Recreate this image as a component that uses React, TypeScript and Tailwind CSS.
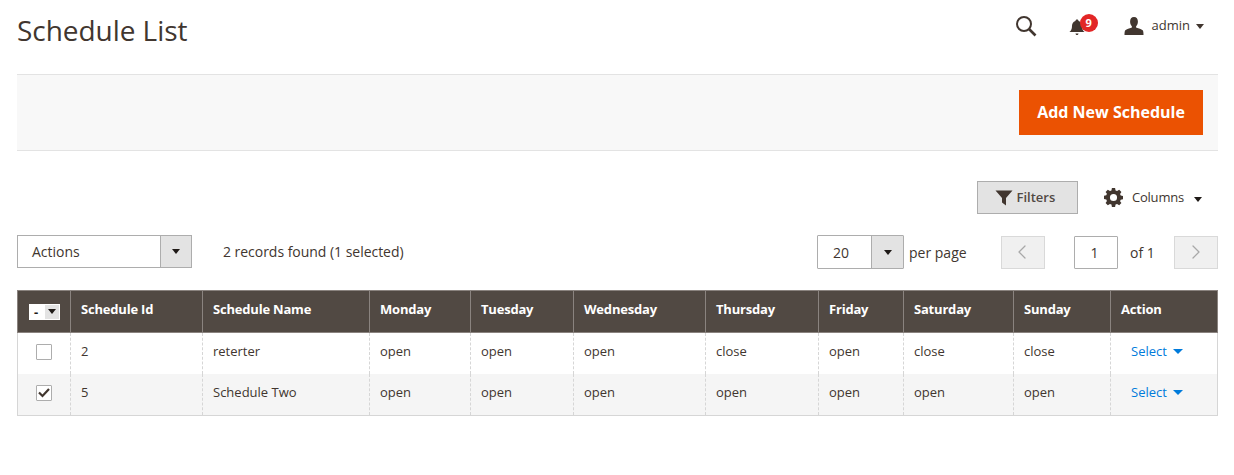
import React from 'react';
import { ChevronLeft, ChevronRight } from 'lucide-react';

const days = ['Monday', 'Tuesday', 'Wednesday', 'Thursday', 'Friday', 'Saturday', 'Sunday'];
const colWidths = [53, 132, 167, 101, 103, 132, 113, 85, 110, 97, 107];

const rows = [
  { id: '2', name: 'reterter', hours: ['open', 'open', 'open', 'close', 'open', 'close', 'close'], checked: false },
  { id: '5', name: 'Schedule Two', hours: ['open', 'open', 'open', 'open', 'open', 'open', 'open'], checked: true },
];

const Caret = ({ className = '' }: { className?: string }) => (
  <span className={`inline-block w-0 h-0 border-x-[4.5px] border-x-transparent border-t-[5px] ${className}`} />
);

const App: React.FC = () => {
  return (
    <div className="w-[1234px] h-[475px] overflow-hidden bg-white text-[#41362f] font-['Open_Sans',sans-serif] text-[14px]">
      {/* Header */}
      <header className="h-[74px] pl-[17px] pr-[30px] flex items-start justify-between">
        <h1 className="text-[28px] leading-[38px] mt-[11px] font-normal tracking-[-0.05px]">Schedule List</h1>
        <div className="flex items-center mt-[13px] h-[26px]">
          <svg width="22" height="22" viewBox="0 0 22 22" fill="none" stroke="#41362f" className="mr-[32px]">
            <circle cx="9" cy="9" r="7" strokeWidth="2" />
            <path d="M14 14l6.5 6.5" strokeWidth="2.6" />
          </svg>
          <div className="relative w-[16px] h-[18px] mt-[4px] mr-[39px]">
            <svg width="16" height="18" viewBox="0 0 16 18" fill="#41362f">
              <path d="M8 0.5c1 0 1.5.7 1.6 1.4C12 2.6 13 4.6 13 7c0 3 .8 4.6 2.6 6H.4C2.2 11.600 3 10 3 7c0-2.400 1-4.400 3.400-5.100C6.500 1.200 7 .5 8 .5zM6.500 14.500h3c0 .9-.6 1.500-1.500 1.500s-1.500-.6-1.500-1.500z" />
            </svg>
            <span className="absolute left-[11px] -top-[5px] w-[18px] h-[18px] rounded-full bg-[#e22626] text-white text-[11px] font-bold leading-[18px] text-center">9</span>
          </div>
          <svg width="20" height="18" viewBox="0 0 20 18" fill="#41362f" className="mr-[8px] -mt-[1px]">
            <path d="M10 0c2.600 0 3.900 1.900 3.900 4.600 0 1.900-.7 3.600-1.700 4.600-.3.500-.2 1.300.4 1.600 2 .9 4.700 1.200 6.100 2.400.7.700.8 2.900.8 4.800H.5c0-1.900.1-4.100.8-4.800 1.400-1.200 4.100-1.500 6.100-2.400.6-.3.7-1.100.4-1.600C6.800 8.200 6.100 6.500 6.100 4.600 6.100 1.900 7.400 0 10 0z" />
          </svg>
          <span className="text-[13px] leading-[18px] -mt-[2px]">admin</span>
          <Caret className="border-t-[#41362f] ml-[6px]" />
        </div>
      </header>

      {/* Page actions */}
      <div className="ml-[17px] mr-[16px] h-[77px] bg-[#f8f8f8] border-y border-[#e3e3e3] flex items-center justify-end pr-[15px]">
        <button className="w-[184px] h-[45px] bg-[#eb5202] text-white text-[16px] font-bold pb-[2px]">Add New Schedule</button>
      </div>

      {/* Grid toolbar */}
      <div className="ml-[17px] mr-[16px] mt-[30px] h-[33px] flex items-center justify-end pr-[16px]">
        <button className="w-[101px] h-[33px] pr-[5px] bg-[#e3e3e3] border border-[#adadad] flex items-center justify-center gap-[4px] text-[13px] text-[#514943] font-semibold">
          <svg width="18" height="16" viewBox="0 0 18 16" fill="#41362f">
            <path d="M0.5 0.500h17L11 8v7.500L7 12.500V8z" />
          </svg>
          Filters
        </button>
        <svg width="19" height="19" viewBox="0 0 24 24" fill="#41362f" className="ml-[26px]">
          <path fillRule="evenodd" d="M10 1h4l.6 3.100 1.900.8L19.200 3.200 22 6l-1.700 2.700.8 1.900 3 .6v4l-3 .6-.8 1.900L22 20l-2.800 2.800-2.700-1.700-1.900.8L14 25h-4l-.6-3.100-1.900-.8L4.800 22.800 2 20l1.700-2.700-.8-1.900-3-.6v-4l3-.6.8-1.900L2 6l2.800-2.800 2.700 1.700 1.900-.8zM12 8.500a4.500 4.500 0 1 0 0 9 4.500 4.500 0 0 0 0-9z" transform="translate(0 -1)" />
        </svg>
        <span className="ml-[9px] text-[13px] tracking-[-0.2px]">Columns</span>
        <Caret className="border-t-[#1f1a17] ml-[10px] mt-[3px]" />
      </div>

      {/* Mass actions and pager */}
      <div className="ml-[17px] mr-[16px] mt-[21px] h-[34px] flex items-center text-[14px]">
        <div className="w-[175px] h-[33px] self-start border border-[#adadad] flex items-center">
          <span className="flex-1 pl-[14px]">Actions</span>
          <span className="w-[31px] h-full bg-[#e3e3e3] border-l border-[#adadad] flex items-center justify-center">
            <Caret className="border-t-[#1f1a17]" />
          </span>
        </div>
        <span className="ml-[31px] -mt-[1px] tracking-[-0.03px]">2 records found (1 selected)</span>
        <div className="ml-auto h-[34px] flex items-start">
          <div className="w-[87px] h-[34px] border border-[#adadad] rounded-[1px] flex items-center">
            <span className="flex-1 pl-[15px]">20</span>
            <span className="w-[32px] h-full bg-[#e3e3e3] border-l border-[#adadad] flex items-center justify-center">
              <Caret className="border-t-[#1f1a17]" />
            </span>
          </div>
          <span className="ml-[5px] w-[92px] leading-[36px]">per page</span>
          <span className="mt-px w-[44px] h-[33px] bg-[#f0f0f0] border border-[#d9d9d9] flex items-center justify-center">
            <ChevronLeft size={24} strokeWidth={1.25} className="text-[#a8a8a8] -ml-[2px] -mt-[1px]" />
          </span>
          <span className="mt-px ml-[29px] w-[44px] h-[33px] pr-[3px] border border-[#adadad] rounded-[1px] flex items-center justify-center">1</span>
          <span className="ml-[12px] w-[44px] leading-[36px]">of 1</span>
          <span className="mt-px w-[44px] h-[33px] bg-[#f0f0f0] border border-[#d9d9d9] flex items-center justify-center">
            <ChevronRight size={24} strokeWidth={1.25} className="text-[#a8a8a8] -mt-[1px]" />
          </span>
        </div>
      </div>

      {/* Grid */}
      <table className="ml-[17px] mt-[21px] w-[1200px] table-fixed border-collapse text-[13px]">
        <colgroup>
          {colWidths.map((w, i) => (
            <col key={i} width={w} />
          ))}
        </colgroup>
        <thead>
          <tr className="h-[42px] bg-[#514943] text-white text-left">
            <th className="border border-[#8a837f] px-0 font-normal">
              <div className="mx-auto w-[31px] h-[16px] bg-white flex items-center">
                <span className="w-[15px] text-center text-[#1f1a17] text-[13px] font-bold leading-[16px]">-</span>
                <span className="w-[16px] h-full bg-[#e3e3e3] border border-white flex items-center justify-center">
                  <Caret className="border-t-[#1f1a17]" />
                </span>
              </div>
            </th>
            {['Schedule Id', 'Schedule Name', ...days, 'Action'].map((h) => (
              <th key={h} className="border border-[#8a837f] pl-[10px] pb-[4px] font-bold tracking-[-0.2px]">{h}</th>
            ))}
          </tr>
        </thead>
        <tbody>
          {rows.map((row) => (
            <tr key={row.id} className={row.checked ? 'h-[42px] bg-[#f5f5f5]' : 'h-[41px] bg-white'}>
              <td className="border-l border-r border-dashed border-[#d6d6d6] [border-left-style:solid] pb-[2px]">
                <span className="mx-auto block w-[16px] h-[16px] border border-[#adadad] rounded-[1px] bg-white">
                  {row.checked && (
                    <svg width="14" height="14" viewBox="0 0 14 14" fill="none" stroke="#41362f" strokeWidth="2.200">
                      <path d="M2 6.500l3.500 3.500L12 3" />
                    </svg>
                  )}
                </span>
              </td>
              <td className="border-r border-dashed border-[#d6d6d6] pl-[10px] pb-[4px]">{row.id}</td>
              <td className="border-r border-dashed border-[#d6d6d6] pl-[10px] pb-[4px]">{row.name}</td>
              {row.hours.map((h, i) => (
                <td key={i} className="border-r border-dashed border-[#d6d6d6] pl-[10px] pb-[4px]">{h}</td>
              ))}
              <td className="border-r border-[#d6d6d6] pl-[20px] pb-[4px] text-[#007bdb]">
                Select
                <span className="inline-block w-0 h-0 border-x-[5px] border-x-transparent border-t-[5px] border-t-[#007bdb] ml-[6px] mb-[2px]" />
              </td>
            </tr>
          ))}
        </tbody>
        <tfoot>
          <tr>
            <td colSpan={11} className="h-0 p-0 border-t border-[#d6d6d6]" />
          </tr>
        </tfoot>
      </table>
    </div>
  );
};

export default App;
